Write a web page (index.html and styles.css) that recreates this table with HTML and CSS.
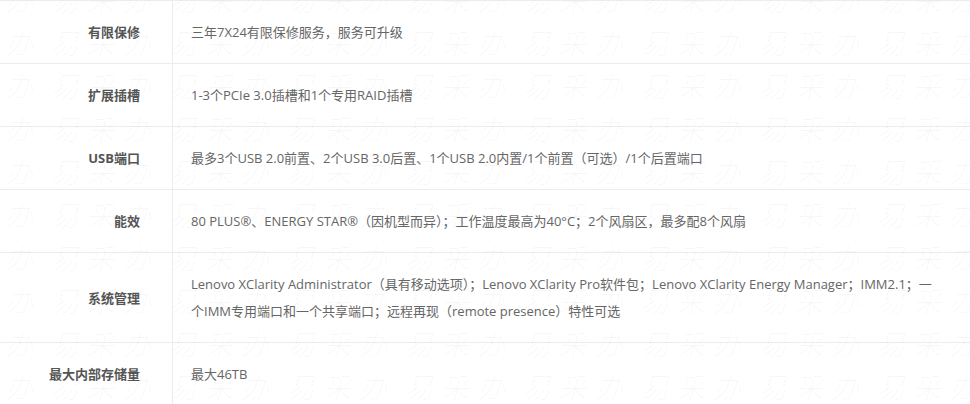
FILE: index.html
```html
<!DOCTYPE html>
<html>
  <head>
    <meta charset="UTF-8" />
    <title>规格参数</title>
    <link rel="stylesheet" href="styles.css">
  </head>
  <body>
    <div class="specs">
      <table class="spec-table">
        <tr>
          <th>有限保修</th>
          <td>三年7X24有限保修服务，服务可升级</td>
        </tr>
        <tr>
          <th>扩展插槽</th>
          <td>1-3个PCIe 3.0插槽和1个专用RAID插槽</td>
        </tr>
        <tr>
          <th>USB端口</th>
          <td>最多3个USB 2.0前置、2个USB 3.0后置、1个USB 2.0内置/1个前置（可选）/1个后置端口</td>
        </tr>
        <tr>
          <th>能效</th>
          <td>80 PLUS®、ENERGY STAR®（因机型而异）；工作温度最高为40°C；2个风扇区，最多配8个风扇</td>
        </tr>
        <tr>
          <th>系统管理</th>
          <td>Lenovo XClarity Administrator（具有移动选项）；Lenovo XClarity Pro软件包；Lenovo XClarity Energy Manager；IMM2.1；一个IMM专用端口和一个共享端口；远程再现（remote presence）特性可选</td>
        </tr>
        <tr>
          <th>最大内部存储量</th>
          <td>最大46TB</td>
        </tr>
      </table>

      <!-- watermark -->
      <div class="watermark">
        <div class="wm-row"><span>易采办</span><span>易采办</span><span>易采办</span><span>易采办</span><span>易采办</span><span>易采办</span><span>易采办</span><span>易采办</span><span>易采办</span></div>
        <div class="wm-row"><span>易采办</span><span>易采办</span><span>易采办</span><span>易采办</span><span>易采办</span><span>易采办</span><span>易采办</span><span>易采办</span><span>易采办</span></div>
        <div class="wm-row"><span>易采办</span><span>易采办</span><span>易采办</span><span>易采办</span><span>易采办</span><span>易采办</span><span>易采办</span><span>易采办</span><span>易采办</span></div>
        <div class="wm-row"><span>易采办</span><span>易采办</span><span>易采办</span><span>易采办</span><span>易采办</span><span>易采办</span><span>易采办</span><span>易采办</span><span>易采办</span></div>
        <div class="wm-row"><span>易采办</span><span>易采办</span><span>易采办</span><span>易采办</span><span>易采办</span><span>易采办</span><span>易采办</span><span>易采办</span><span>易采办</span></div>
        <div class="wm-row"><span>易采办</span><span>易采办</span><span>易采办</span><span>易采办</span><span>易采办</span><span>易采办</span><span>易采办</span><span>易采办</span><span>易采办</span></div>
        <div class="wm-row"><span>易采办</span><span>易采办</span><span>易采办</span><span>易采办</span><span>易采办</span><span>易采办</span><span>易采办</span><span>易采办</span><span>易采办</span></div>
        <div class="wm-row"><span>易采办</span><span>易采办</span><span>易采办</span><span>易采办</span><span>易采办</span><span>易采办</span><span>易采办</span><span>易采办</span><span>易采办</span></div>
        <div class="wm-row"><span>易采办</span><span>易采办</span><span>易采办</span><span>易采办</span><span>易采办</span><span>易采办</span><span>易采办</span><span>易采办</span><span>易采办</span></div>
        <div class="wm-row"><span>易采办</span><span>易采办</span><span>易采办</span><span>易采办</span><span>易采办</span><span>易采办</span><span>易采办</span><span>易采办</span><span>易采办</span></div>
        <div class="wm-row"><span>易采办</span><span>易采办</span><span>易采办</span><span>易采办</span><span>易采办</span><span>易采办</span><span>易采办</span><span>易采办</span><span>易采办</span></div>
      </div>
    </div>
  </body>
</html>
```

FILE: styles.css
```css
body {
  margin: 0;
  background: #fff;
  font-family: "Open Sans", "Noto Sans CJK SC", sans-serif;
  font-size: 13px;
  color: #666;
}

.specs {
  position: relative;
  overflow: hidden;
}

.spec-table {
  width: 100%;
  border-collapse: collapse;
}

.spec-table th,
.spec-table td {
  border-top: 1px solid #ececec;
  padding: 18px 0 17px;
  line-height: 27px;
  vertical-align: middle;
}

.spec-table th {
  width: 140px;
  padding-right: 32px;
  text-align: right;
  font-weight: bold;
  color: #555;
  border-right: 1px solid #ececec;
}

.spec-table td {
  padding-left: 18px;
  padding-right: 30px;
  text-align: left;
}

/* watermark */
.watermark {
  position: absolute;
  top: -22px;
  left: -67px;
  pointer-events: none;
  font-family: "Noto Sans CJK SC", sans-serif;
  font-size: 28px;
  font-weight: 300;
  font-style: italic;
  line-height: 43px;
  color: rgba(0, 0, 0, 0.035);
  white-space: nowrap;
}

.wm-row span {
  display: inline-block;
  width: 118px;
  letter-spacing: 8px;
}
```
